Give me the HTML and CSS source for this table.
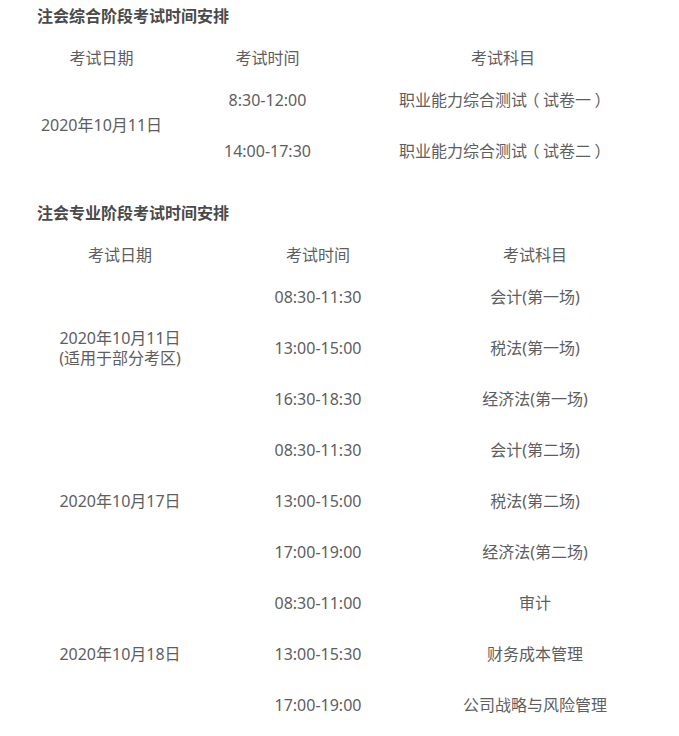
FILE: index.html
```html
<!DOCTYPE html>
<html lang="zh-CN">
<head>
<meta charset="utf-8">
<title>注会考试时间安排</title>
<link rel="stylesheet" href="styles.css">
</head>
<body>
<div class="page">
  <p class="title">注会综合阶段考试时间安排</p>
  <table class="sched s1">
    <colgroup><col class="c1"><col class="c2"><col class="c3"></colgroup>
    <tr class="head"><td>考试日期</td><td>考试时间</td><td>考试科目</td></tr>
    <tr><td rowspan="2">2020年10月11日</td><td>8:30-12:00</td><td>职业能力综合测试<span class="br">（</span>试卷一<span class="br">）</span></td></tr>
    <tr><td>14:00-17:30</td><td>职业能力综合测试<span class="br">（</span>试卷二<span class="br">）</span></td></tr>
  </table>

  <p class="title second">注会专业阶段考试时间安排</p>
  <table class="sched s2">
    <colgroup><col class="c1"><col class="c2"><col class="c3"></colgroup>
    <tr class="head"><td>考试日期</td><td>考试时间</td><td>考试科目</td></tr>
    <tr><td rowspan="3">2020年10月11日<span class="note">(适用于部分考区)</span></td><td>08:30-11:30</td><td>会计(第一场)</td></tr>
    <tr><td>13:00-15:00</td><td>税法(第一场)</td></tr>
    <tr><td>16:30-18:30</td><td>经济法(第一场)</td></tr>
    <tr><td rowspan="3">2020年10月17日</td><td>08:30-11:30</td><td>会计(第二场)</td></tr>
    <tr><td>13:00-15:00</td><td>税法(第二场)</td></tr>
    <tr><td>17:00-19:00</td><td>经济法(第二场)</td></tr>
    <tr><td rowspan="3">2020年10月18日</td><td>08:30-11:00</td><td>审计</td></tr>
    <tr><td>13:00-15:30</td><td>财务成本管理</td></tr>
    <tr><td>17:00-19:00</td><td>公司战略与风险管理</td></tr>
  </table>
</div>
</body>
</html>
```
FILE: styles.css
```css
html, body {
  margin: 0;
  padding: 0;
  background: #ffffff;
}

body {
  font-family: "Noto Sans", "Noto Sans CJK SC", sans-serif;
  font-size: 16px;
  color: #5e5e5e;
}

.page {
  padding-left: 37px;
}

.title {
  margin: 0 0 9px 0;
  line-height: 32px;
  font-size: 16px;
  font-weight: bold;
  color: #4a4a4a;
}

.title.second {
  margin-top: 21px;
}

.sched {
  border-collapse: collapse;
  table-layout: fixed;
  width: 600px;
}

.sched td {
  padding: 0;
  height: 51px;
  line-height: 20px;
  text-align: center;
  vertical-align: middle;
}

.sched tr.head td {
  height: 33px;
}

.s1 .c1 { width: 129px; }
.s1 .c2 { width: 203px; }
.s1 .c3 { width: 268px; }

.s2 .c1 { width: 166px; }
.s2 .c2 { width: 230px; }
.s2 .c3 { width: 204px; }

/* full-width brackets: proportional glyph, centred in a 1em box */
.br {
  display: inline-block;
  width: 16px;
  text-align: center;
  font-feature-settings: "palt";
}

.note {
  display: block;
}
```
